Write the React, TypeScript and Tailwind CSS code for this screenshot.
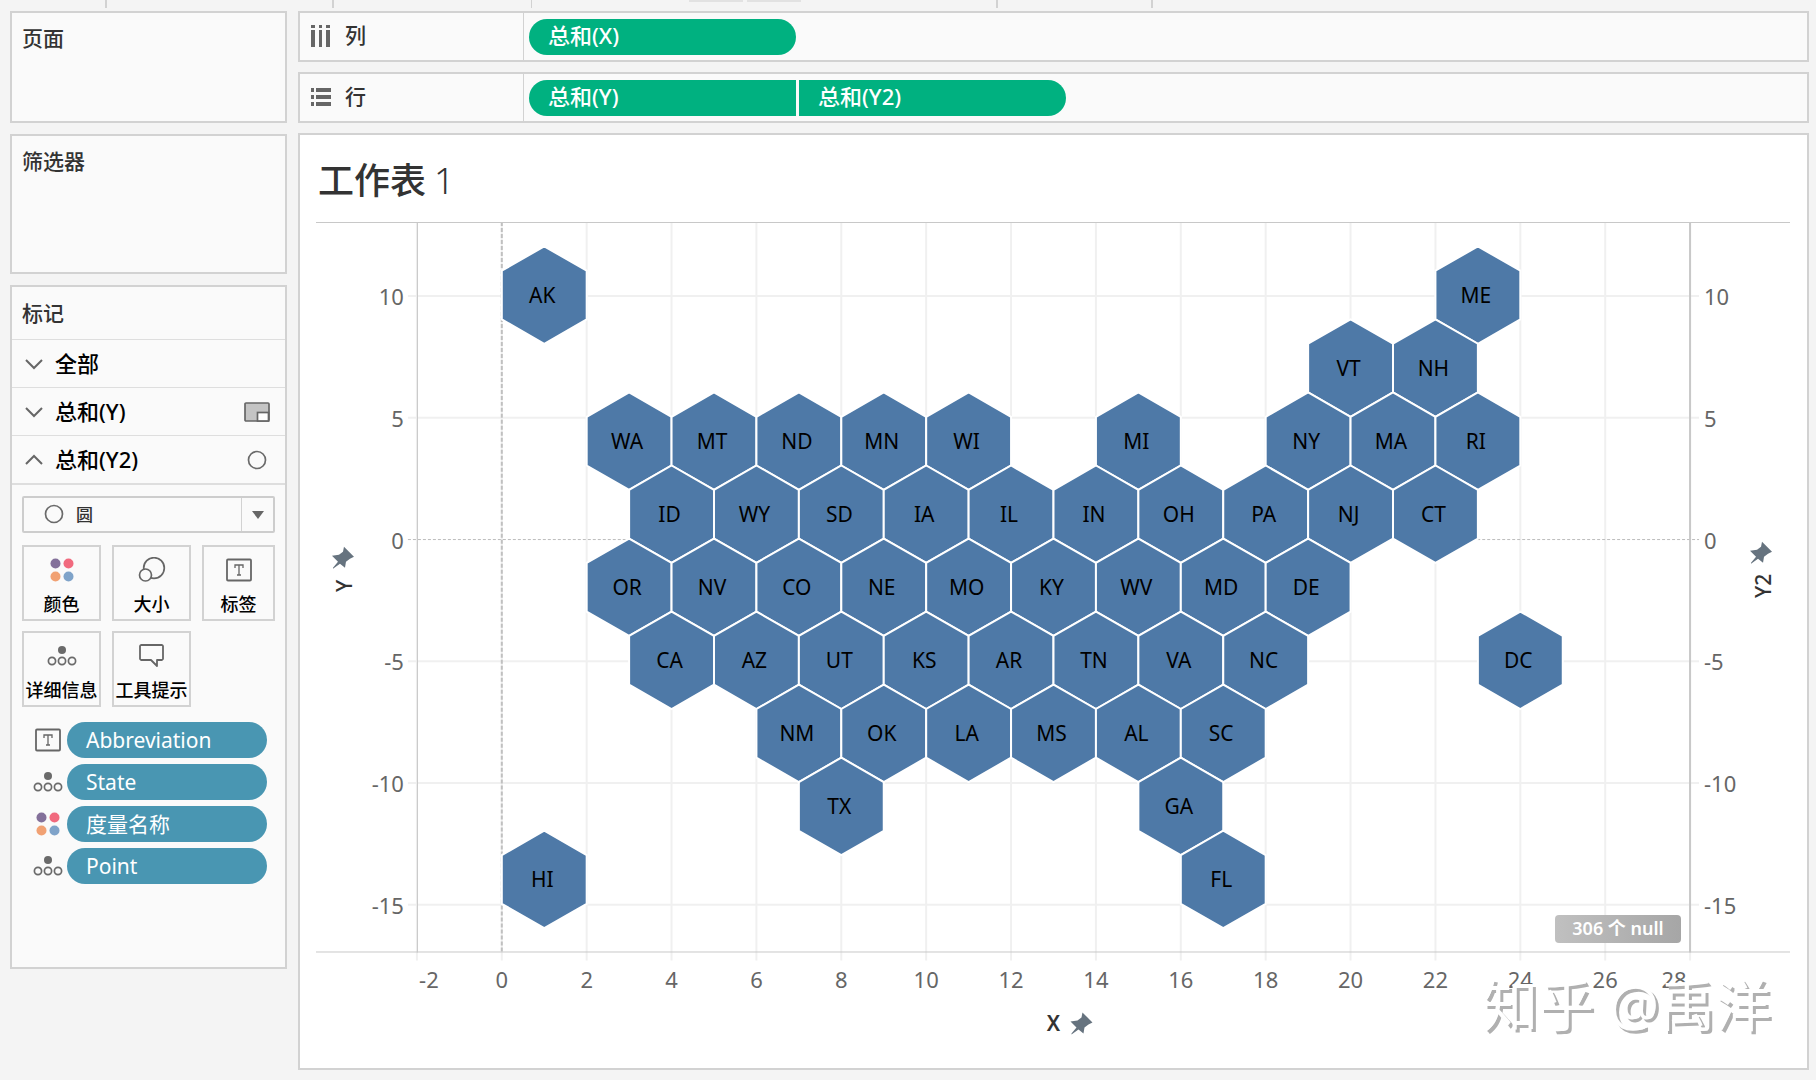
import React from "react";

const FONT = 'font-["Noto_Sans","Noto_Sans_CJK_SC",sans-serif]';

type State = [string, number, number];

const STATES: State[] = [
  ["AK", 1, 10], ["ME", 23, 10],
  ["VT", 20, 7], ["NH", 22, 7],
  ["WA", 3, 4], ["MT", 5, 4], ["ND", 7, 4], ["MN", 9, 4], ["WI", 11, 4], ["MI", 15, 4], ["NY", 19, 4], ["MA", 21, 4], ["RI", 23, 4],
  ["ID", 4, 1], ["WY", 6, 1], ["SD", 8, 1], ["IA", 10, 1], ["IL", 12, 1], ["IN", 14, 1], ["OH", 16, 1], ["PA", 18, 1], ["NJ", 20, 1], ["CT", 22, 1],
  ["OR", 3, -2], ["NV", 5, -2], ["CO", 7, -2], ["NE", 9, -2], ["MO", 11, -2], ["KY", 13, -2], ["WV", 15, -2], ["MD", 17, -2], ["DE", 19, -2],
  ["CA", 4, -5], ["AZ", 6, -5], ["UT", 8, -5], ["KS", 10, -5], ["AR", 12, -5], ["TN", 14, -5], ["VA", 16, -5], ["NC", 18, -5], ["DC", 24, -5],
  ["NM", 7, -8], ["OK", 9, -8], ["LA", 11, -8], ["MS", 13, -8], ["AL", 15, -8], ["SC", 17, -8],
  ["TX", 8, -11], ["GA", 16, -11],
  ["HI", 1, -14], ["FL", 17, -14],
];

const LEFT = 101;
const RIGHT = 1375;
const TOP = 2;
const BOTTOM = 733;
const px = (x: number) => LEFT + ((x + 2) / 30) * (RIGHT - LEFT);
const py = (y: number) => TOP + ((13 - y) / 30) * (BOTTOM - TOP);
const X_TICKS = [-2, 0, 2, 4, 6, 8, 10, 12, 14, 16, 18, 20, 22, 24, 26, 28];
const Y_TICKS = [10, 5, 0, -5, -10, -15];

function hexPoints(x: number, y: number) {
  return [[0, 2], [1, 1], [1, -1], [0, -2], [-1, -1], [-1, 1]]
    .map(([dx, dy]) => `${px(x + dx)},${py(y + dy)}`)
    .join(" ");
}

function Pin({ x, y }: { x: number; y: number }) {
  return (
    <path
      transform={`translate(${x} ${y})`}
      fill="#66737f"
      d="M1-11 11-1 7 1 3 4 2 10-3 6-10 11-10 10-5 4-11-2-4-3 0-6Z"
    />
  );
}

function HexChart() {
  return (
    <svg viewBox="0 0 1476 830" className="block w-full" role="img" aria-label="工作表 1">
      <g stroke="#f0f0f0" strokeWidth="2">
        {X_TICKS.map((t) => (
          <line key={t} x1={px(t)} x2={px(t)} y1={TOP} y2={BOTTOM + 8} />
        ))}
        {Y_TICKS.filter((t) => t !== 0).map((t) => (
          <line key={t} x1={LEFT - 9} x2={RIGHT + 9} y1={py(t) + 1} y2={py(t) + 1} />
        ))}
      </g>
      <line x1={px(0)} x2={px(0)} y1={TOP} y2={BOTTOM} stroke="#c0c0c0" strokeWidth="2" strokeDasharray="4 2" />
      <line x1={LEFT - 9} x2={RIGHT + 9} y1={py(0) + 1} y2={py(0) + 1} stroke="#bcbcbc" strokeDasharray="3 2" />
      <g stroke="#c8c8c8">
        <line x1="0" x2="1475" y1={TOP + 0.5} y2={TOP + 0.5} />
        <line x1="0" x2="1475" y1={BOTTOM - 0.5} y2={BOTTOM - 0.5} />
        <line x1={LEFT + 0.5} x2={LEFT + 0.5} y1={TOP} y2={BOTTOM} />
        <line x1={RIGHT} x2={RIGHT} y1={TOP} y2={BOTTOM} strokeWidth="2" />
      </g>
      {STATES.map(([name, x, y]) => (
        <polygon key={name} points={hexPoints(x, y)} fill="#4e79a7" stroke="#ffffff" strokeWidth="2" />
      ))}
      <g fontSize="21" fill="#000000" textAnchor="middle">
        {STATES.map(([name, x, y]) => (
          <text key={name} x={px(x) - 2} y={py(y) + 8}>{name}</text>
        ))}
      </g>
      <g fontSize="22" fill="#666666">
        {Y_TICKS.map((t) => (
          <text key={t} x="88" y={py(t) + 10} textAnchor="end">{t}</text>
        ))}
        {Y_TICKS.map((t) => (
          <text key={t} x="1389" y={py(t) + 10}>{t}</text>
        ))}
        {X_TICKS.map((t) => (
          <text key={t} x={t === -2 ? px(t) + 12 : t === 28 ? px(t) - 16 : px(t)} y="769" textAnchor="middle">{t}</text>
        ))}
      </g>
      <g fontSize="21" fontWeight="600" fill="#333333" textAnchor="middle">
        <text x="738" y="812">X</text>
      </g>
      <g fontSize="21" fontWeight="500" fill="#333333" textAnchor="middle">
        <text transform="translate(36 366) rotate(-90)">Y</text>
        <text transform="translate(1456 366) rotate(-90)">Y2</text>
      </g>
      <Pin x={766} y={804} />
      <Pin x={27} y={338} />
      <Pin x={1446} y={333} />
    </svg>
  );
}

function ColorIcon() {
  return (
    <svg width="24" height="24" viewBox="0 0 24 24" aria-hidden="true">
      <circle cx="5.5" cy="5.5" r="5" fill="#83709a" />
      <circle cx="18.5" cy="5.5" r="5" fill="#f16a7e" />
      <circle cx="5.5" cy="18.5" r="5" fill="#f1a173" />
      <circle cx="18.5" cy="18.5" r="5" fill="#7fa3c9" />
    </svg>
  );
}

function DetailIcon() {
  return (
    <svg width="30" height="22" viewBox="0 0 30 22" aria-hidden="true" fill="none" stroke="#6a6a6a" strokeWidth="1.7">
      <circle cx="15" cy="5" r="4" fill="#6a6a6a" stroke="none" />
      <circle cx="5" cy="16" r="3.6" />
      <circle cx="15" cy="16" r="3.6" />
      <circle cx="25" cy="16" r="3.6" />
    </svg>
  );
}

function LabelIcon() {
  return (
    <svg width="26" height="24" viewBox="0 0 26 24" aria-hidden="true" fill="none" stroke="#666666">
      <rect x="1" y="1.5" width="24" height="21" rx="1" strokeWidth="1.8" />
      <path d="M9 10V7h8v3M13 7v10M11 17h4" strokeWidth="1.3" />
    </svg>
  );
}

function SizeIcon() {
  return (
    <svg width="28" height="26" viewBox="0 0 28 26" aria-hidden="true" fill="none" stroke="#666666" strokeWidth="1.7">
      <circle cx="16" cy="11" r="10.3" />
      <circle cx="7.5" cy="18" r="6" fill="#fafafa" />
    </svg>
  );
}

function TooltipIcon() {
  return (
    <svg width="28" height="26" viewBox="0 0 28 26" aria-hidden="true" fill="none" stroke="#666666" strokeWidth="1.8" strokeLinejoin="round">
      <path d="M3 2h21a2 2 0 0 1 1 1v13a2 2 0 0 1-1 1h-5v6l-6-6H3a2 2 0 0 1-1-1V3a2 2 0 0 1 1-1Z" />
    </svg>
  );
}

function Circle() {
  return (
    <svg width="20" height="20" viewBox="0 0 20 20" aria-hidden="true" fill="none" stroke="#6a6a6a" strokeWidth="1.7">
      <circle cx="10" cy="10" r="8.5" />
    </svg>
  );
}

function Chevron({ up }: { up?: boolean }) {
  return (
    <svg width="18" height="12" viewBox="0 0 18 12" aria-hidden="true" fill="none" stroke="#666666" strokeWidth="2">
      <path d={up ? "M1 10 9 2l8 8" : "M1 2l8 8 8-8"} />
    </svg>
  );
}

function MarksRow({ label, up, children }: { label: string; up?: boolean; children?: React.ReactNode }) {
  return (
    <button type="button" className="flex h-12 w-full items-center border-t border-[#dedede] pr-[15px] pl-[13px] text-[22px] text-black">
      <Chevron up={up} />
      <span className="ml-3 flex-1 text-left font-medium">{label}</span>
      {children}
    </button>
  );
}

function MarkButton({ label, children }: { label: string; children: React.ReactNode }) {
  return (
    <button type="button" className="flex h-[76px] flex-col items-center justify-between border-2 border-[#d2d2d2] pt-2.5 pb-0.5 text-[18px] leading-[26px] font-medium whitespace-nowrap text-black">
      <span className="flex h-[26px] items-center">{children}</span>
      <span>{label}</span>
    </button>
  );
}

function MarkPill({ label, children }: { label: string; children: React.ReactNode }) {
  return (
    <li className="flex items-center">
      <span className="flex w-[31px] justify-center">{children}</span>
      <button type="button" className="ml-1 h-[36px] flex-1 rounded-full bg-[#4996b2] px-[19px] text-left text-[21px] leading-[34px] text-white">
        {label}
      </button>
    </li>
  );
}

function Shelf({ label, icon, children }: { label: string; icon: React.ReactNode; children: React.ReactNode }) {
  return (
    <section className="flex h-[51px] border-2 border-[#d2d2d2] bg-[#fafafa]">
      <h2 className="flex w-[224px] items-center gap-3.5 border-r border-[#d2d2d2] pb-0.5 pl-[11px] text-[21px] font-medium text-[#333333]">
        {icon}
        {label}
      </h2>
      <div className="flex items-center gap-[3px] pl-[5px] text-[22px] font-medium text-white">{children}</div>
    </section>
  );
}

const panel = "border-2 border-[#d2d2d2] bg-[#fafafa]";
const panelTitle = "px-2.5 text-[21px] leading-[28px] text-[#333333] font-medium";
const shelfPill = "h-[36px] w-[267px] bg-[#00b180] px-[19px] pb-0.5 text-left";

export default function App() {
  return (
    <div className={`min-h-screen bg-[#f4f4f4] pr-[7px] pb-2.5 pl-2.5 ${FONT}`}>
      <div className="flex h-[11px] items-start" aria-hidden="true">
        <span className="ml-[95px] h-2 w-0.5 bg-[#d2d2d2]" />
        <span className="ml-[225px] h-2 w-0.5 bg-[#d2d2d2]" />
        <span className="ml-[197px] h-2 w-px bg-[#d2d2d2]" />
        <span className="ml-[157px] h-0.5 w-[54px] bg-[#e2e2e2]" />
        <span className="ml-1 h-0.5 w-[54px] bg-[#e2e2e2]" />
        <span className="ml-[195px] h-2 w-0.5 bg-[#d2d2d2]" />
        <span className="ml-[153px] h-2 w-0.5 bg-[#d2d2d2]" />
      </div>
      <div className="flex gap-[11px]">
        <aside className="flex w-[277px] shrink-0 flex-col gap-[11px]">
          <section className={`${panel} min-h-[112px] pt-[11px]`}>
            <h2 className={panelTitle}>页面</h2>
          </section>
          <section className={`${panel} min-h-[140px] pt-[11px]`}>
            <h2 className={panelTitle}>筛选器</h2>
          </section>
          <section className={`${panel} min-h-[684px]`}>
            <h2 className={`${panelTitle} py-3`}>标记</h2>
            <div className="flex flex-col">
              <MarksRow label="全部" />
              <MarksRow label="总和(Y)">
                <svg width="26" height="20" viewBox="0 0 26 20" aria-hidden="true" stroke="#666666" strokeWidth="1.7">
                  <rect x="1" y="1" width="24" height="18" rx="1" fill="#c4c4c4" />
                  <rect x="13.500" y="10.500" width="11" height="8.500" fill="#ffffff" />
                </svg>
              </MarksRow>
              <MarksRow label="总和(Y2)" up>
                <span className="mr-[3px]"><Circle /></span>
              </MarksRow>
            </div>
            <div className="border-t-2 border-[#dedede] px-2.5 pt-[11px]">
              <div className="relative">
                <span className="pointer-events-none absolute top-2 left-[22px]"><Circle /></span>
                <select aria-label="标记类型" className="h-[37px] w-full appearance-none rounded-xs border-2 border-[#cdcdcd] bg-transparent pl-[52px] text-[17px] font-medium text-[#333333]">
                  <option>圆</option>
                </select>
                <span className="pointer-events-none absolute top-0.5 right-0.5 bottom-0.5 flex w-8 items-center justify-center border-l border-[#d2d2d2]">
                  <svg width="12" height="8" viewBox="0 0 12 8" aria-hidden="true"><path d="M0 0h12L6 8Z" fill="#666666" /></svg>
                </span>
              </div>
              <div className="mt-3 grid grid-cols-[79px_79px_73px] gap-x-[11px] gap-y-2.5">
                <MarkButton label="颜色"><ColorIcon /></MarkButton>
                <MarkButton label="大小"><SizeIcon /></MarkButton>
                <MarkButton label="标签"><LabelIcon /></MarkButton>
                <MarkButton label="详细信息"><DetailIcon /></MarkButton>
                <MarkButton label="工具提示"><TooltipIcon /></MarkButton>
              </div>
              <ul className="mt-[15px] flex flex-col gap-1.5 pr-2 pl-2.5">
                <MarkPill label="Abbreviation"><LabelIcon /></MarkPill>
                <MarkPill label="State"><DetailIcon /></MarkPill>
                <MarkPill label="度量名称"><ColorIcon /></MarkPill>
                <MarkPill label="Point"><DetailIcon /></MarkPill>
              </ul>
            </div>
          </section>
        </aside>
        <main className="flex min-w-0 flex-1 flex-col gap-2.5">
          <Shelf
            label="列"
            icon={
              <svg width="20" height="22" viewBox="0 0 20 22" aria-hidden="true" fill="#666666">
                <path d="M0 0h4v3H0ZM8 0h3v3H8ZM15 0h4v3h-4ZM0 5h4v17H0ZM8 5h3v17H8ZM15 5h4v17h-4Z" />
              </svg>
            }
          >
            <button type="button" className={`${shelfPill} rounded-full`}>总和(X)</button>
          </Shelf>
          <Shelf
            label="行"
            icon={
              <svg width="20" height="18" viewBox="0 0 20 18" aria-hidden="true" fill="#666666">
                <path d="M0 0h3v4H0ZM0 7h3v4H0ZM0 14h3v4H0ZM5 0h15v4H5ZM5 7h15v4H5ZM5 14h15v4H5Z" />
              </svg>
            }
          >
            <button type="button" className={`${shelfPill} rounded-l-full`}>总和(Y)</button>
            <button type="button" className={`${shelfPill} rounded-r-full`}>总和(Y2)</button>
          </Shelf>
          <section className="relative min-h-[937px] border-2 border-[#d2d2d2] bg-white px-4 pt-5">
            <h1 className="flex h-[65px] gap-2 pl-0.5 text-[36px] leading-[52px] font-medium text-[#333333]">
              工作表<span className="font-light">1</span>
            </h1>
            <div className="relative">
              <HexChart />
              <button type="button" className="absolute top-[695px] right-[110px] h-7 w-[126px] rounded bg-linear-to-r from-[#c0c0c0] to-[#a6a6a6] pb-0.5 text-[18px] leading-[26px] font-semibold text-white">
                306 个 null
              </button>
            </div>
            <p className="absolute right-9 bottom-7 text-[56px] leading-[72px] text-white [text-shadow:3px_3px_0_#b0b0b0]">
              知乎 @禹洋
            </p>
          </section>
        </main>
      </div>
    </div>
  );
}
